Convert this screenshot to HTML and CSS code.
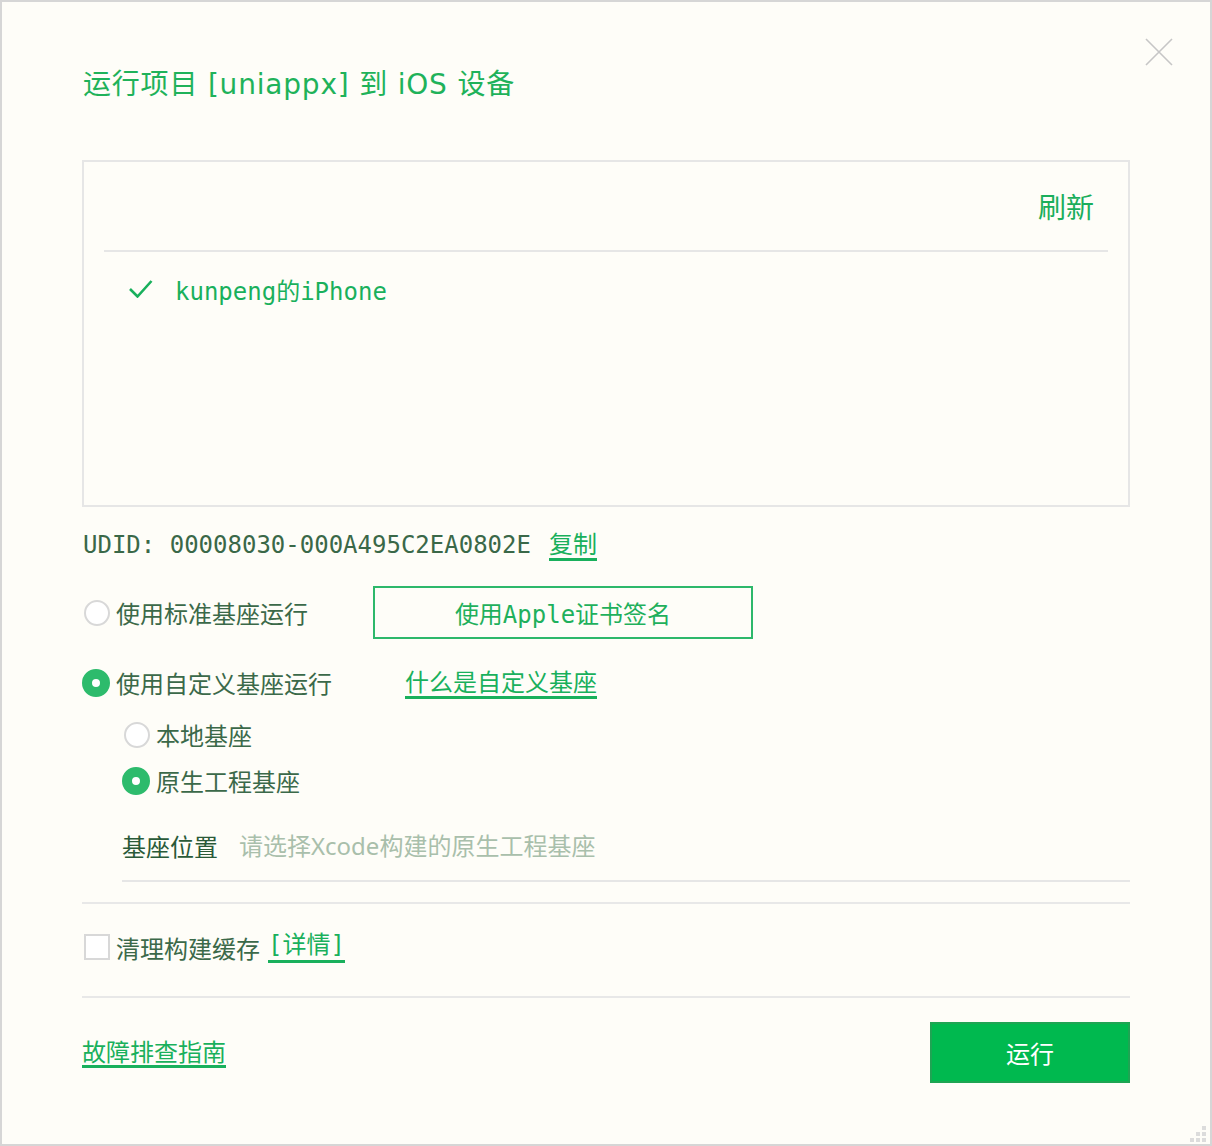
FILE: index.html
```html
<!DOCTYPE html>
<html lang="zh-CN">
<head>
<meta charset="UTF-8" />
<meta name="viewport" content="width=device-width, initial-scale=1" />
<title>运行项目到 iOS 设备</title>
<link rel="stylesheet" href="styles.css">
</head>
<body>
  <div class="window">
    <button class="close-btn" aria-label="关闭">
      <svg width="28" height="28" viewBox="0 0 28 28"><path d="M1 1 L27 27 M27 1 L1 27" stroke="#c6c6c6" stroke-width="1.6" fill="none"/></svg>
    </button>

    <h1 class="title">运行项目 [uniappx] 到 iOS 设备</h1>

    <div class="device-box">
      <div class="device-head">
        <span class="refresh">刷新</span>
      </div>
      <div class="device-item">
        <svg class="check" width="24" height="18" viewBox="0 0 24 18"><polyline points="1,9 8.5,16.5 22.5,1" stroke="#19b05c" stroke-width="2.6" fill="none"/></svg>
        <span class="device-name">kunpeng的iPhone</span>
      </div>
    </div>

    <div class="udid-row">
      <span class="udid">UDID: 00008030-000A495C2EA0802E</span>
      <a class="link">复制</a>
    </div>

    <div class="opt-row opt-row-first">
      <label class="radio"><span class="dot"></span>使用标准基座运行</label>
      <button class="sign-btn">使用Apple证书签名</button>
    </div>

    <div class="opt-row opt-row-second">
      <label class="radio"><span class="dot on"></span>使用自定义基座运行</label>
      <a class="link link-custom">什么是自定义基座</a>
    </div>

    <div class="sub-opts">
      <label class="radio"><span class="dot"></span>本地基座</label>
      <label class="radio"><span class="dot on"></span>原生工程基座</label>
    </div>

    <div class="field">
      <span class="field-label">基座位置</span>
      <span class="field-input">请选择Xcode构建的原生工程基座</span>
    </div>

    <div class="divider divider-a"></div>

    <div class="clean-row">
      <span class="box"></span>
      <span class="clean-label">清理构建缓存</span>
      <a class="link link-detail">[详情]</a>
    </div>

    <div class="divider divider-b"></div>

    <div class="footer">
      <a class="link">故障排查指南</a>
      <button class="run-btn">运行</button>
    </div>

    <svg class="grip" width="18" height="18" viewBox="0 0 18 18">
      <rect x="12" y="0" width="4" height="4" fill="#dcdcdc"/>
      <rect x="6" y="6" width="4" height="4" fill="#dcdcdc"/>
      <rect x="12" y="6" width="4" height="4" fill="#dcdcdc"/>
      <rect x="0" y="12" width="4" height="4" fill="#dcdcdc"/>
      <rect x="6" y="12" width="4" height="4" fill="#dcdcdc"/>
      <rect x="12" y="12" width="4" height="4" fill="#dcdcdc"/>
    </svg>
  </div>
</body>
</html>
```

FILE: styles.css
```css
body {
  margin: 0;
  background: #fefdf8;
  font-family: "Noto Sans CJK SC", sans-serif;
}
.window {
  position: relative;
  box-sizing: border-box;
  width: 1212px;
  height: 1146px;
  border: 2px solid #d6d6d6;
  background: #fefdf8;
  padding: 63px 80px 0 80px;
  color: #3b6949;
}
.close-btn {
  position: absolute;
  top: 36px;
  right: 37px;
  width: 28px;
  height: 28px;
  padding: 0;
  border: none;
  background: none;
}
.close-btn svg {
  display: block;
}
.title {
  margin: 0 0 55px 1px;
  font-family: "DejaVu Sans", "Noto Sans CJK SC", sans-serif;
  font-weight: normal;
  font-size: 28px;
  line-height: 40px;
  letter-spacing: 0.8px;
  color: #1fb25a;
}
.device-box {
  height: 347px;
  box-sizing: border-box;
  border: 2px solid #e6e6e6;
}
.device-head {
  margin: 0 20px;
  height: 90px;
  box-sizing: border-box;
  padding: 0 14px 0 0;
  border-bottom: 2px solid #e6e6e6;
  display: flex;
  align-items: center;
  justify-content: flex-end;
}
.refresh {
  font-size: 28px;
  color: #1aae5b;
}
.device-item {
  display: flex;
  align-items: center;
  padding: 20px 0 0 45px;
  height: 34px;
}
.check {
  display: block;
  margin-right: 22px;
}
.device-name {
  font-family: "DejaVu Sans Mono", "Noto Sans CJK SC", monospace;
  font-size: 24px;
  color: #19b05c;
}
.link {
  display: inline-block;
  line-height: 1.2;
  font-size: 24px;
  color: #19b05c;
  border-bottom: 3px solid #19b05c;
}
.udid-row {
  display: flex;
  align-items: center;
  height: 34px;
  margin: 21px 0 0 1px;
}
.udid {
  font-family: "DejaVu Sans Mono", "Noto Sans CJK SC", monospace;
  font-size: 24px;
  color: #3a6848;
  margin-right: 18px;
}
.opt-row {
  display: flex;
  align-items: center;
}
.opt-row-first {
  margin-top: 24px;
  height: 53px;
}
.opt-row-second {
  margin-top: 27px;
  height: 34px;
}
.radio {
  display: flex;
  align-items: center;
  font-size: 24px;
  line-height: 34px;
  color: #3b6949;
}
.dot {
  box-sizing: border-box;
  width: 26px;
  height: 26px;
  margin: 0 6px 0 2px;
  border-radius: 50%;
  border: 2px solid #d8d8d8;
  background: #fff;
}
.dot.on {
  width: 28px;
  height: 28px;
  margin-left: 0;
  border: 10px solid #2dbb6c;
  background: #fff;
}
.sign-btn {
  margin-left: 65px;
  width: 380px;
  height: 53px;
  border: 2px solid #2db86b;
  background: transparent;
  font-family: "DejaVu Sans Mono", "Noto Sans CJK SC", monospace;
  font-size: 24px;
  color: #1fb05c;
}
.link-custom {
  margin-left: 73px;
}
.sub-opts {
  display: flex;
  flex-direction: column;
  gap: 12px;
  margin: 18px 0 0 40px;
}
.field {
  margin: 31px 0 0 40px;
  padding-bottom: 17px;
  border-bottom: 2px solid #e6e6e6;
  display: flex;
  align-items: center;
  font-size: 24px;
  line-height: 34px;
}
.field-label {
  color: #2a5a38;
  margin-right: 21px;
}
.field-input {
  font-family: "Noto Sans", "Noto Sans CJK SC", sans-serif;
  color: #a9bfab;
}
.divider {
  height: 2px;
  background: #e8e8e8;
}
.divider-a {
  margin-top: 20px;
}
.divider-b {
  margin-top: 32px;
}
.clean-row {
  display: flex;
  align-items: center;
  height: 34px;
  margin-top: 26px;
}
.box {
  box-sizing: border-box;
  width: 26px;
  height: 26px;
  margin: 0 6px 0 2px;
  border: 2px solid #d8d8d8;
  background: #fff;
}
.clean-label {
  font-size: 24px;
  color: #3b6949;
  margin-right: 8px;
}
.link-detail {
  font-family: "DejaVu Sans Mono", "Noto Sans CJK SC", monospace;
}
.footer {
  margin-top: 24px;
  display: flex;
  align-items: center;
  justify-content: space-between;
}
.run-btn {
  width: 200px;
  height: 61px;
  border: 2px solid #1ea553;
  background: #00b94f;
  color: #fff;
  font-family: "Noto Sans CJK SC", sans-serif;
  font-size: 24px;
}
.grip {
  position: absolute;
  right: 2px;
  bottom: 0;
}
```
